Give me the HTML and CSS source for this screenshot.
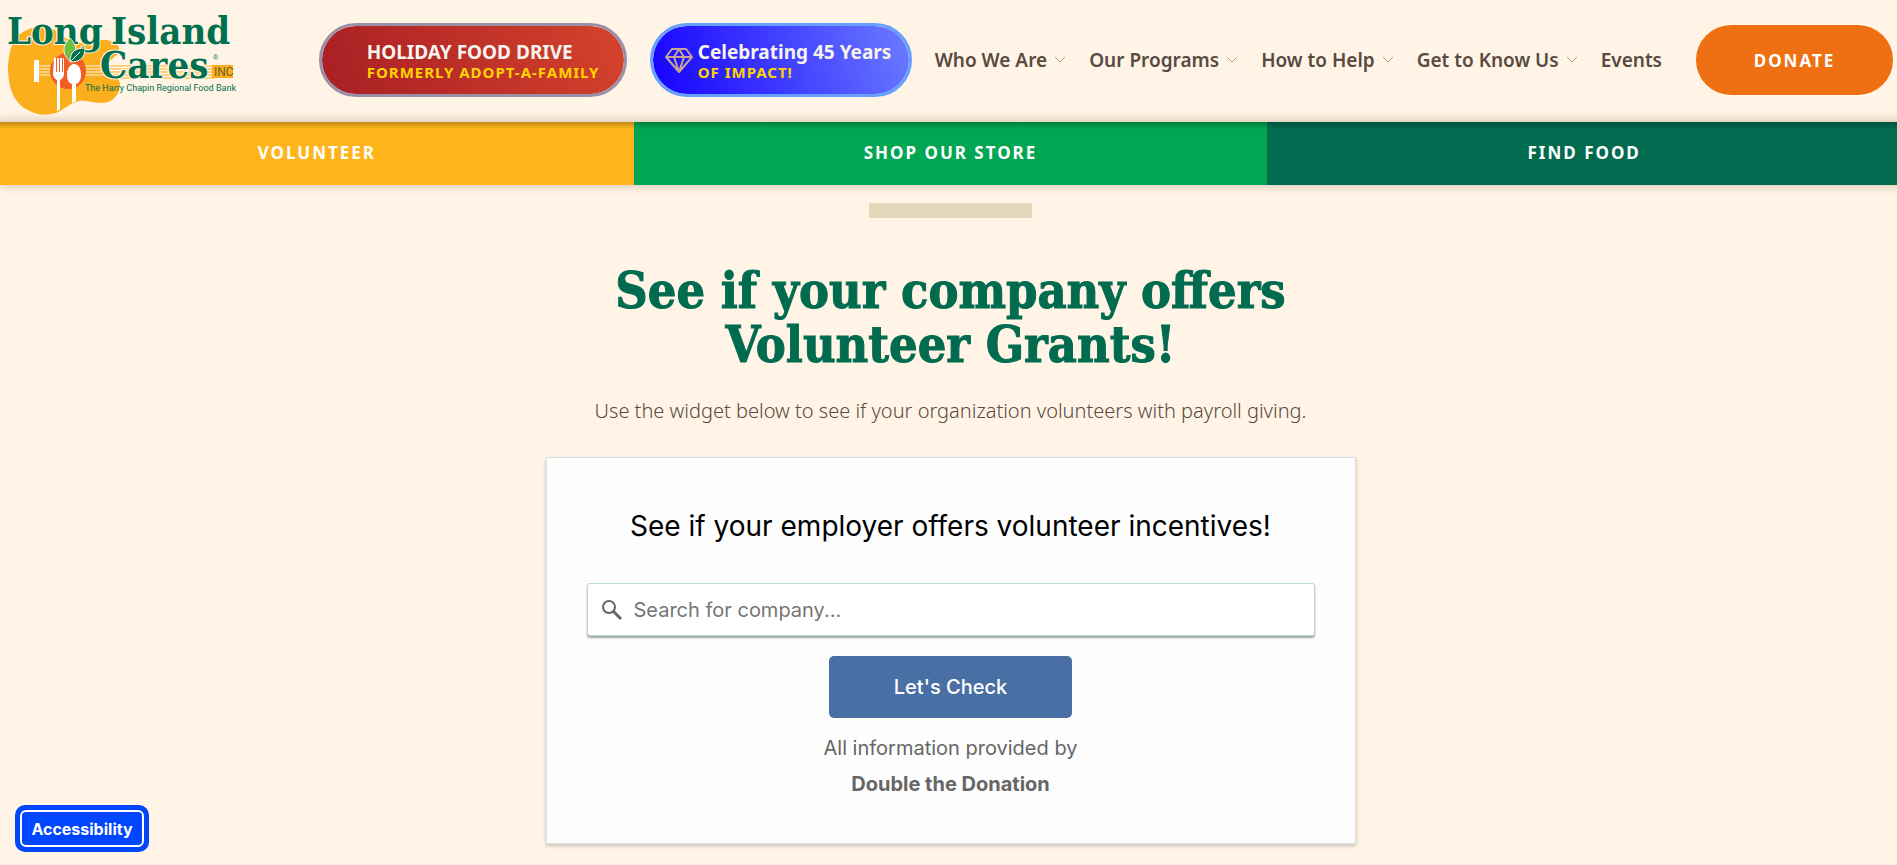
FILE: index.html
```html
<!DOCTYPE html>
<html lang="en">
<head>
<meta charset="utf-8">
<meta name="viewport" content="width=device-width, initial-scale=1">
<title>Volunteer Grants - Long Island Cares</title>
<link rel="stylesheet" href="styles.css">
</head>
<body>
<header class="header">
  <a class="logo" href="#" aria-label="Long Island Cares home">
    <svg width="240" height="118" viewBox="0 0 240 118" role="img" aria-label="Long Island Cares Inc, The Harry Chapin Regional Food Bank">
      <path fill="#fbaf1d" d="M27 29C36 24 50 25 58 31C68 41 79 43 90 42C101 37 116 38 119 47C121 54 106 60 104 68C105 75 121 74 120 84C119 96 111 102 101 102C91 102 87 99 79 100C70 102 66 107 60 110C51 115 39 115 30 110C14 104 8 86 8 67C9 50 12 35 27 29Z"/>
      <path stroke="#fff4e6" stroke-width="1" d="M38 65H104M38 68H104M38 71H104M38 74H104"/>
      <path stroke="#fbaf1d" stroke-width="1" d="M104 65H214M104 68H214M104 71H214M104 74H214M104 77H214"/>
      <path fill="#fff" d="M34 59h5v22h-5z"/>
      <circle cx="68" cy="70" r="18" fill="#f15f27"/>
      <path fill="#fff" d="M54 57h2v14h1V57h2v14h1V57h2v14h1V57h1v16c0 3-2 5-4 6v29l-3 2V79c-2-1-4-3-4-6z"/>
      <path fill="#fff" d="M74 63c5 0 7 5 7 11c0 5-2 8-5 9v17l-4 2V83c-3-1-5-4-5-9c0-6 3-11 7-11z"/>
      <rect x="212" y="64" width="21" height="13" fill="#fbaf1d"/>
      <g class="logo-name">
        <text x="7" y="43">Long</text>
        <text x="111" y="43">Island</text>
        <text x="100" y="77">Cares</text>
      </g>
      <path fill="#6fbe44" stroke="#fff4e6" d="M70 37C77 44 78 51 70 60C62 54 62 44 70 37Z"/>
      <path fill="#00704f" stroke="#fff4e6" d="M85 47C85 57 80 61 70 61C70 51 75 47 85 47Z"/>
      <path stroke="#fff4e6" fill="none" d="M70 61L80 51"/>
      <text class="logo-reg" x="213" y="59">®</text>
      <text class="logo-inc" x="214" y="75">INC</text>
      <text class="logo-tag" x="85" y="90">The Harry Chapin Regional Food Bank</text>
    </svg>
  </a>
  <a class="pill pill-red" href="#">
    <span class="pill-text"><span class="pill-title">HOLIDAY FOOD DRIVE</span><span class="pill-sub">FORMERLY ADOPT-A-FAMILY</span></span>
  </a>
  <a class="pill pill-blue" href="#">
    <svg class="gem" width="28" height="25" viewBox="0 0 28 25" fill="none" stroke="#c4a596" stroke-width="2" stroke-linejoin="round" aria-hidden="true"><path d="M7 1H21L27 9L14 24L1 9ZM1 9H27M14 1L9 9L14 24L19 9L14 1"/></svg>
    <span class="pill-text"><span class="pill-title">Celebrating 45 Years</span><span class="pill-sub">OF IMPACT!</span></span>
  </a>
  <nav class="nav" aria-label="Main">
    <a href="#">Who We Are<svg class="chev" width="10" height="6" viewBox="0 0 10 6"><path d="M0 0L5 5L10 0"/></svg></a>
    <a href="#">Our Programs<svg class="chev" width="10" height="6" viewBox="0 0 10 6"><path d="M0 0L5 5L10 0"/></svg></a>
    <a href="#">How to Help<svg class="chev" width="10" height="6" viewBox="0 0 10 6"><path d="M0 0L5 5L10 0"/></svg></a>
    <a href="#">Get to Know Us<svg class="chev" width="10" height="6" viewBox="0 0 10 6"><path d="M0 0L5 5L10 0"/></svg></a>
    <a href="#">Events</a>
  </nav>
  <a class="donate" href="#">DONATE</a>
</header>
<nav class="actions" aria-label="Get involved">
  <a class="act-volunteer" href="#">VOLUNTEER</a>
  <a class="act-shop" href="#">SHOP OUR STORE</a>
  <a class="act-food" href="#">FIND FOOD</a>
</nav>
<main class="main">
  <div class="rule"></div>
  <h1>See if your company offers<br>Volunteer Grants!</h1>
  <p class="intro">Use the widget below to see if your organization volunteers with payroll giving.</p>
  <form class="card">
    <h2>See if your employer offers volunteer incentives!</h2>
    <label class="search">
      <svg width="20" height="20" viewBox="0 0 20 20" fill="none" stroke="#666" stroke-width="2" aria-hidden="true"><circle cx="7" cy="7" r="6"/><path d="M11 11L19 19" stroke-width="3"/></svg>
      <input type="text" aria-label="Search for company" placeholder="Search for company...">
    </label>
    <button class="check" type="button">Let's Check</button>
    <p class="credit">All information provided by<br><a href="#">Double the Donation</a></p>
  </form>
</main>
<button class="access" type="button"><span>Accessibility</span></button>
</body>
</html>
```
FILE: styles.css
```css
* { box-sizing: border-box; }
body { margin: 0; background: #fff4e6; color: #594a42; font-family: "Noto Sans", "Open Sans", sans-serif; overflow: hidden; }
a { color: inherit; text-decoration: none; }
.header { display: flex; align-items: center; height: 122px; padding: 0 4px 2px 0; background: linear-gradient(#fff4e6 112px, #eee0d0 122px); }
.logo { flex: none; margin-right: auto; }
.logo svg { display: block; }
.logo-name { font: bold 38px "DejaVu Serif Condensed", "DejaVu Serif", serif; fill: #00704f; stroke: #fff4e6; stroke-width: 2px; paint-order: stroke; }
.logo-reg { font: 7px "Liberation Sans", sans-serif; fill: #00704f; }
.logo-inc { font: 12px Roboto, sans-serif; fill: #6b6120; }
.logo-tag { font: 9px Roboto, sans-serif; fill: #00704f; }
.pill { display: flex; align-items: center; height: 74px; border: 3px solid; border-radius: 37px; color: #f7f3ee; white-space: nowrap; }
.pill-red { width: 308px; padding-left: 45px; margin-right: 23px; border-color: #998fa6; background: linear-gradient(70deg, #a81e24, #d5432c) padding-box; }
.pill-blue { width: 262px; padding-left: 12px; margin-right: 23px; gap: 5px; border-color: #66a0ff; background: linear-gradient(70deg, #1500ff, #6b7cff) padding-box; }
.pill-text { display: flex; flex-direction: column; padding-top: 2px; }
.pill-title { font-size: 19px; line-height: 22px; font-weight: 700; }
.pill-sub { font-size: 15px; line-height: 18px; font-weight: 700; letter-spacing: 1px; color: #ffd400; }
.nav { display: flex; gap: 24px; margin-right: 34px; font-size: 19px; font-weight: 600; white-space: nowrap; }
.nav a { display: flex; align-items: center; gap: 8px; }
.chev { overflow: visible; fill: none; stroke: #b79a84; stroke-width: 1px; }
.donate { display: grid; place-items: center; width: 197px; height: 70px; border-radius: 35px; background: #ef7012; color: #fff; font-size: 17px; font-weight: 700; letter-spacing: 2px; }
.actions { display: grid; grid-template-columns: repeat(3, 1fr); height: 63px; margin-right: -4px; box-shadow: 0 2px 8px rgba(90, 50, 10, .2); }
.actions a { display: grid; place-items: center; padding-bottom: 3px; color: #fff; font-size: 17px; font-weight: 700; letter-spacing: 2px; }
.act-volunteer { background: linear-gradient(#c48b14, #ffb519 7px); }
.act-shop { background: linear-gradient(#007f3e, #00a651 7px); }
.act-food { background: linear-gradient(#00523d, #006b4f 7px); }
.main { display: flex; flex-direction: column; align-items: center; padding: 18px 0 20px 4px; text-align: center; }
.rule { width: 163px; height: 15px; background: #e5d8ba; }
h1 { margin: 46px 0 0; color: #006b4f; font: bold 50px/54px "DejaVu Serif Condensed", "DejaVu Serif", serif; -webkit-text-stroke: 1px #006b4f; }
.intro { margin: 24px 0 31px; font-size: 20px; line-height: 30px; font-weight: 300; }
.card { display: flex; flex-direction: column; align-items: center; width: 810px; max-width: 100%; padding: 48px 40px 31px; background: #fdfdfd; border: 1px solid #dbdfe3; box-shadow: 0 2px 4px rgba(0, 0, 0, .2); color: #666; font-family: Inter, sans-serif; }
h2 { margin: 0 0 37px; color: #000; font-size: 28px; line-height: 40px; font-weight: 400; }
.search { display: flex; flex: none; align-items: center; width: 100%; height: 53px; gap: 12px; padding: 0 14px; background: #fff; border: 1px solid #bdd6de; border-radius: 3px; box-shadow: 0 2px 2px rgba(0, 0, 0, .35); }
.search input { flex: 1; min-width: 0; padding: 0; border: 0; outline: 0; background: none; font: 20px/30px Inter, sans-serif; }
.search input::placeholder { color: #757575; }
.check { flex: none; width: 243px; height: 62px; margin: 20px 0 12px; border: 0; border-radius: 5px; background: #4a6fa5; color: #fff; font: 500 20px Inter, sans-serif; }
.credit { margin: 0; padding-bottom: 10px; font-size: 20px; line-height: 36px; }
.credit a { font-weight: 700; }
.access { position: fixed; left: 15px; bottom: 13px; padding: 5px; border: 0; border-radius: 10px; background: #0046ff; color: #fff; font: bold 16px/20px Inter, sans-serif; }
.access span { display: grid; place-items: center; width: 124px; height: 37px; border: 2px solid #fff; border-radius: 6px; }
```
